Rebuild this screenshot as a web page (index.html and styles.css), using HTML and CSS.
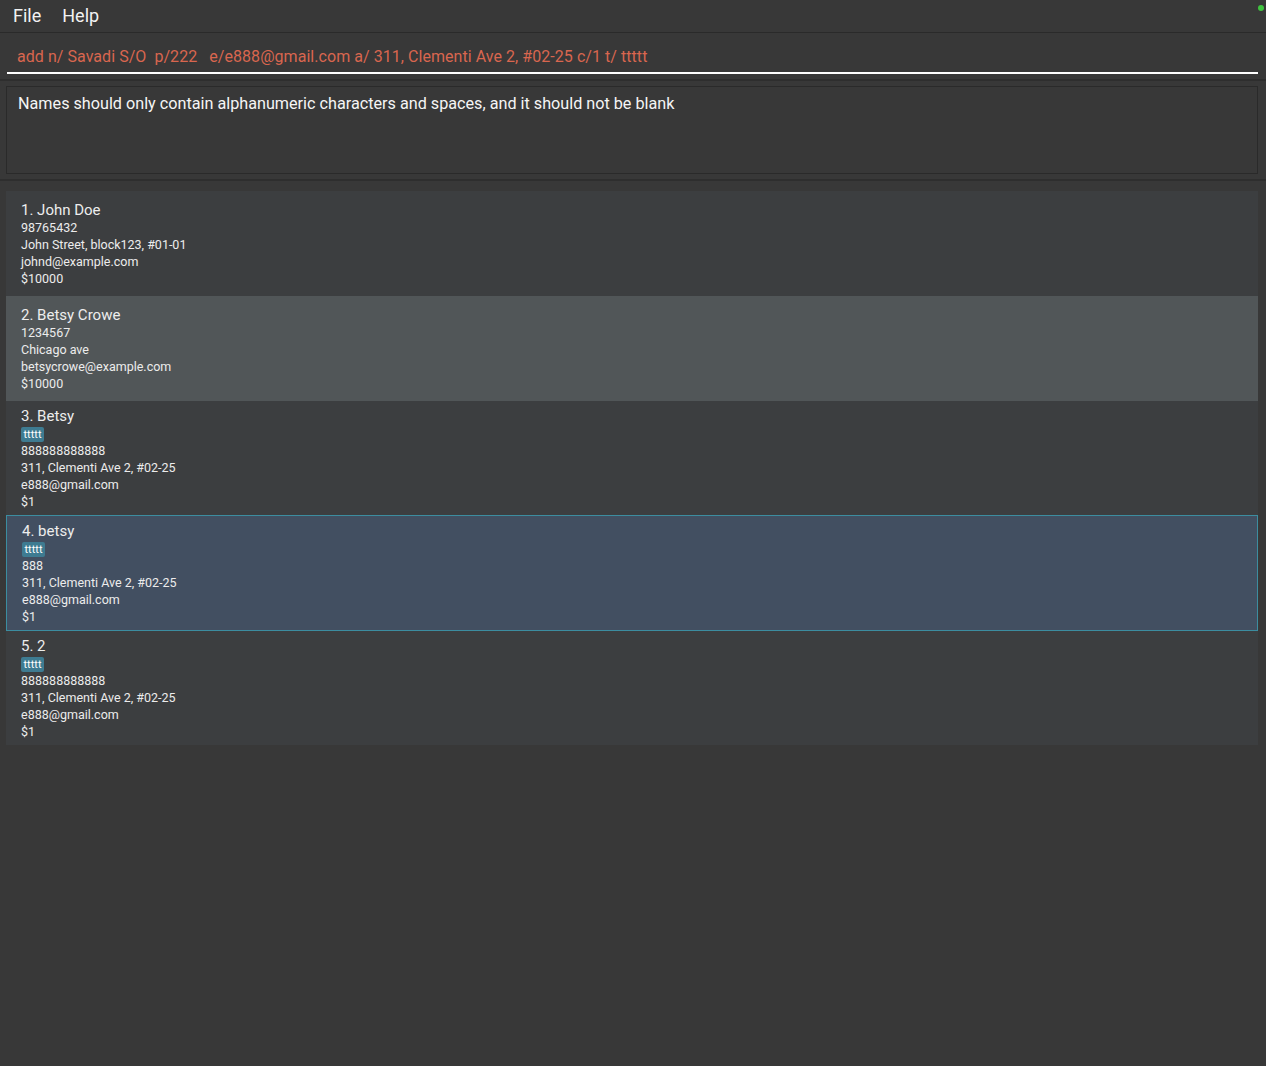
FILE: index.html
```html
<!DOCTYPE html>
<html>
<head>
<meta charset="utf-8">
<link rel="stylesheet" href="styles.css">
</head>
<body>
<div class="app">
  <div class="menubar">
    <span class="menu-item">File</span>
    <span class="menu-item">Help</span>
    <span class="status-dot"></span>
  </div>
  <div class="command-pane">
    <div class="command-box">add n/ Savadi S/O  p/222   e/e888@gmail.com a/ 311, Clementi Ave 2, #02-25 c/1 t/ ttttt</div>
  </div>
  <div class="result-pane">
    <div class="result-box">Names should only contain alphanumeric characters and spaces, and it should not be blank</div>
  </div>
  <div class="list-pane">
    <div class="list">
      <div class="card">
        <div class="name">1. John Doe</div>
        <div class="detail">98765432</div>
        <div class="detail">John Street, block123, #01-01</div>
        <div class="detail">johnd@example.com</div>
        <div class="detail">$10000</div>
      </div>
      <div class="card odd">
        <div class="name">2. Betsy Crowe</div>
        <div class="detail">1234567</div>
        <div class="detail">Chicago ave</div>
        <div class="detail">betsycrowe@example.com</div>
        <div class="detail">$10000</div>
      </div>
      <div class="card tagged">
        <div class="name">3. Betsy</div>
        <div class="tags"><span class="tag">ttttt</span></div>
        <div class="detail">888888888888</div>
        <div class="detail">311, Clementi Ave 2, #02-25</div>
        <div class="detail">e888@gmail.com</div>
        <div class="detail">$1</div>
      </div>
      <div class="card tagged selected">
        <div class="name">4. betsy</div>
        <div class="tags"><span class="tag">ttttt</span></div>
        <div class="detail">888</div>
        <div class="detail">311, Clementi Ave 2, #02-25</div>
        <div class="detail">e888@gmail.com</div>
        <div class="detail">$1</div>
      </div>
      <div class="card tagged">
        <div class="name">5. 2</div>
        <div class="tags"><span class="tag">ttttt</span></div>
        <div class="detail">888888888888</div>
        <div class="detail">311, Clementi Ave 2, #02-25</div>
        <div class="detail">e888@gmail.com</div>
        <div class="detail">$1</div>
      </div>
    </div>
  </div>
</div>
</body>
</html>
```

FILE: styles.css
```css
html, body {
  margin: 0;
  padding: 0;
  background: #383838;
}
body {
  font-family: Roboto, "Liberation Sans", sans-serif;
  color: #ffffff;
  width: 1266px;
  height: 1066px;
  overflow: hidden;
}
.app {
  display: flex;
  flex-direction: column;
  height: 1066px;
}
.menubar {
  position: relative;
  height: 32px;
  border-bottom: 1px solid #2a2a2a;
  display: flex;
  align-items: center;
  padding-left: 13px;
  gap: 21px;
}
.menu-item {
  font-size: 18px;
  color: #f2f2f2;
  line-height: 32px;
}
.status-dot {
  position: absolute;
  right: 2px;
  top: 5px;
  width: 6px;
  height: 6px;
  border-radius: 50%;
  background: #3fc43f;
}
.command-pane {
  height: 46px;
  padding: 0 8px 0 7px;
  border-bottom: 2px solid #2e2e2e;
}
.command-box {
  white-space: pre;
  font-size: 16px;
  letter-spacing: 0.05px;
  color: #d9664f;
  height: 41px;
  line-height: 20px;
  padding: 14px 0 0 10px;
  box-sizing: border-box;
  border-bottom: 2px solid #ffffff;
}
.result-pane {
  padding: 5px 8px 5px 6px;
  border-bottom: 2px solid #2e2e2e;
}
.result-box {
  height: 88px;
  border: 1px solid #2a2a2a;
  box-sizing: border-box;
  padding: 7px 11px;
  font-size: 16.2px;
  line-height: 20px;
  color: #f5f5f5;
}
.list-pane {
  padding: 10px 8px 0 6px;
}
.list {
  display: flex;
  flex-direction: column;
}
.card {
  background: #3c3e40;
  padding: 9px 14px 8px 14px;
  border: 1px solid transparent;
}
.card.tagged {
  padding-top: 5px;
  padding-bottom: 4px;
}
.card.odd {
  background: #515658;
}
.card.selected {
  background: #424f61;
  border-color: #3c8da0;
  padding: 6px 14px 5px 15px;
}
.name {
  font-size: 15px;
  line-height: 18px;
  color: #ededed;
}
.detail {
  font-size: 12.5px;
  line-height: 17px;
  color: #ececec;
}
.tags {
  display: flex;
  margin-top: 1px;
  height: 16px;
  align-items: center;
}
.tag {
  background: #3e7b91;
  color: #ffffff;
  font-size: 11px;
  line-height: 15px;
  height: 15px;
  padding: 0 2.5px;
  border-radius: 2px;
}
```
